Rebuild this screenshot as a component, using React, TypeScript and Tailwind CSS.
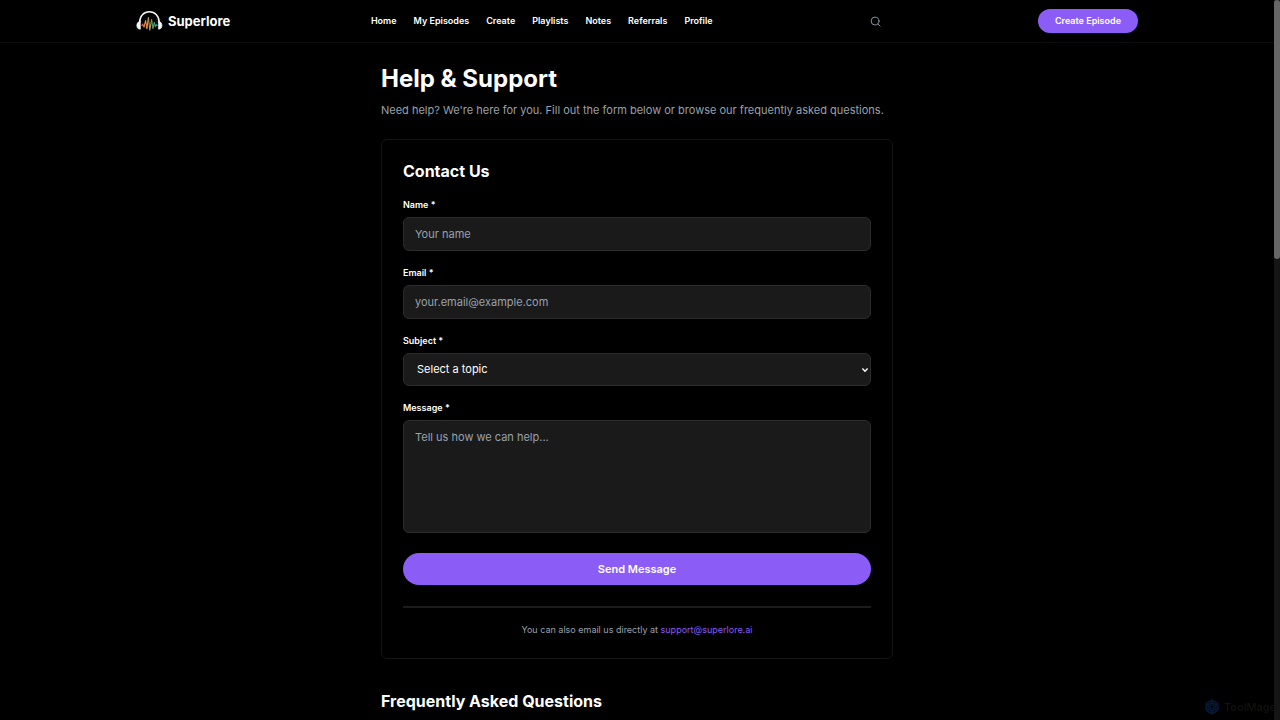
import { useState } from "react";

type FieldProps = {
  id: string,
  label: string,
  children: React.ReactNode,
}

const links = ["Home", "My Episodes", "Create", "Playlists", "Notes", "Referrals", "Profile"];

const topics = ["General question", "Technical issue", "Billing", "Feedback"];

const boxStyle = "block w-full rounded-md border border-[#2c2c2c] bg-[#1a1a1a] text-[11px] text-white placeholder:text-[#99a1ac] outline-none";

function Logo() {
  return (
    <a href="#" className="flex items-center gap-1">
      <svg viewBox="0 0 28 22" className="h-[22px] w-7" fill="none" strokeLinecap="round" strokeLinejoin="round">
        <path d="M3.6 12.5C3.6 6.2 7.8 1.8 13.4 1.8S23.2 6.2 23.2 12.5" stroke="#f4f4f4" strokeWidth="1.5" />
        <path d="M4.4 11.6v7.6C2 19.2.8 17.6.8 15.4s1.2-3.8 3.6-3.8zM22.4 11.6v7.6c2.4 0 3.6-1.6 3.6-3.8s-1.2-3.8-3.6-3.8z" fill="#f4f4f4" stroke="#f4f4f4" strokeWidth=".6" />
        <path d="M5.8 15.6l1-1.6 1.2 3" stroke="#e0574f" strokeWidth="1.1" />
        <path d="M8 17l1.6-6.4 1.3 7.8" stroke="#e8893e" strokeWidth="1.1" />
        <path d="M10.9 18.4l1.5-10.6" stroke="#e3a04b" strokeWidth="1.1" />
        <path d="M12.4 7.8l1.4 12.4 1.8-10.6" stroke="#b59a4c" strokeWidth="1.1" />
        <path d="M15.6 9.6l1.3 9 1.4-6" stroke="#4fa36c" strokeWidth="1.1" />
        <path d="M18.3 12.6l1 4 1.1-2 .8 1" stroke="#3b9c95" strokeWidth="1.1" />
      </svg>
      <span className="text-[13px] leading-5 font-bold">Superlore</span>
    </a>
  )
}

function Header() {
  return (
    <header className="border-b border-[#0c0c0c]">
      <div className="mx-auto flex h-[42px] max-w-[1024px] items-center justify-between px-[11px]">
        <Logo />
        <nav className="flex gap-[17px] text-[9px] font-semibold">
          {links.map(link => <a key={link} href="#">{link}</a>)}
        </nav>
        <button type="button" aria-label="Search" className="flex h-8 w-11 items-center justify-center text-[#99a1ac]">
          <svg viewBox="0 0 24 24" className="size-[11px]" fill="none" stroke="currentColor" strokeWidth="2" strokeLinecap="round">
            <circle cx="11" cy="11" r="8.5" />
            <path d="M22 22l-4.6-4.6" />
          </svg>
        </button>
        <button type="button" className="h-6 rounded-full bg-[#8b5cf6] px-[17px] text-[9px] font-semibold">Create Episode</button>
      </div>
    </header>
  )
}

function Field({id, label, children}: FieldProps) {
  return (
    <div>
      <label htmlFor={id} className="mb-1 block text-[9px] leading-4 font-semibold">{label} *</label>
      {children}
    </div>
  )
}

function ContactForm() {
  const [topic, setTopic] = useState("");

  return (
    <form className="flex flex-col gap-5" onSubmit={e => e.preventDefault()}>
      <div className="flex flex-col gap-[14px]">
        <Field id="name" label="Name">
          <input id="name" type="text" placeholder="Your name" className={`${boxStyle} h-[34px] px-[11px]`} />
        </Field>
        <Field id="email" label="Email">
          <input id="email" type="email" placeholder="your.email@example.com" className={`${boxStyle} h-[34px] px-[11px]`} />
        </Field>
        <Field id="subject" label="Subject">
          <div className="relative">
            <select id="subject" value={topic} onChange={e => setTopic(e.target.value)} className={`${boxStyle} h-[33px] appearance-none px-[13px]`}>
              <option value="">Select a topic</option>
              {topics.map(t => <option key={t} value={t}>{t}</option>)}
            </select>
            <svg viewBox="0 0 8 8" className="pointer-events-none absolute inset-y-0 right-[2px] my-auto size-2" fill="none" stroke="#fff" strokeWidth="1.4">
              <path d="M1.4 2.6L4 5.2l2.6-2.6" />
            </svg>
          </div>
        </Field>
        <Field id="message" label="Message">
          <textarea id="message" placeholder="Tell us how we can help..." className={`${boxStyle} h-[113px] resize-none px-[11px] py-2 leading-4`} />
        </Field>
      </div>
      <button type="submit" className="h-8 rounded-full bg-[#8b5cf6] text-[11px] font-semibold">Send Message</button>
    </form>
  )
}

// faint badge in the bottom corner
function Watermark() {
  return (
    <div className="fixed right-1 bottom-1 flex items-center gap-1 text-[#14110f]">
      <svg viewBox="0 0 16 16" className="size-4" fill="none" stroke="#071a38" strokeWidth="1.2">
        <path d="M8 1l6 3.5v7L8 15l-6-3.5v-7z" />
        <circle cx="8" cy="8" r="2" />
        <ellipse cx="8" cy="8" rx="6" ry="3.4" />
        <ellipse cx="8" cy="8" rx="6" ry="3.4" transform="rotate(60 8 8)" />
        <ellipse cx="8" cy="8" rx="6" ry="3.4" transform="rotate(120 8 8)" />
      </svg>
      <span className="text-[11px] leading-[18px] font-medium">ToolMage</span>
    </div>
  )
}

export default function App() {
  return (
    <div className="min-h-screen bg-black pr-[6px] font-['Inter',sans-serif] text-white">
      <Header />
      <main className="mx-auto max-w-[512px] pt-5 pb-2">
        <h1 className="text-[24px] leading-8 font-bold">Help &amp; Support</h1>
        <p className="mt-[6px] text-[11px] leading-[18px] text-[#99a1ac]">
          Need help? We're here for you. Fill out the form below or browse our frequently asked questions.
        </p>
        <section className="mt-5 rounded-md border border-[#151515] px-[21px] pt-[21px] pb-5">
          <h2 className="mb-4 text-[16px] leading-5 font-bold">Contact Us</h2>
          <ContactForm />
          <p className="mt-[21px] border-t-2 border-[#1c1c1c] pt-[14px] text-center text-[9px] leading-4 text-[#99a1ac]">
            You can also email us directly at <a href="mailto:support@superlore.ai" className="text-[#8b5cf6]">support@superlore.ai</a>
          </p>
        </section>
        <h2 className="mt-8 text-[16px] leading-5 font-bold">Frequently Asked Questions</h2>
      </main>
      <div className="fixed inset-y-0 right-0 w-[6px] bg-[#151515]">
        <div className="h-[36%] rounded-sm bg-[#666]"></div>
      </div>
      <Watermark />
    </div>
  )
}
